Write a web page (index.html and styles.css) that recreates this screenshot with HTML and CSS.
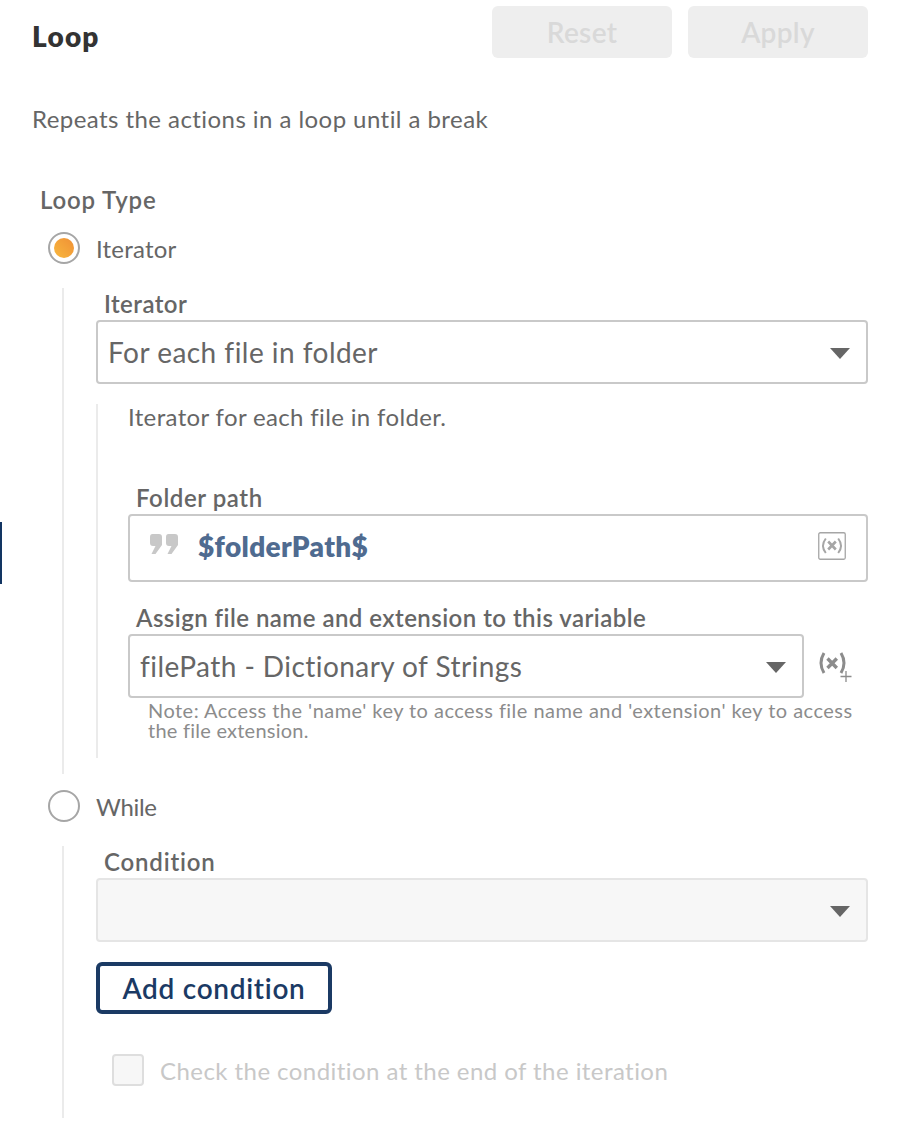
FILE: index.html
```html
<!DOCTYPE html>
<html lang="en">
<head>
<meta charset="utf-8">
<title>Loop</title>
<link rel="stylesheet" href="styles.css">
</head>
<body>
<main class="panel">
  <div class="edge-marker"></div>
  <header class="header">
    <h1 class="title">Loop</h1>
    <div class="actions">
      <button class="action" disabled>Reset</button>
      <button class="action" disabled>Apply</button>
    </div>
  </header>
  <p class="description">Repeats the actions in a loop until a break</p>
  <h2 class="label group-label">Loop Type</h2>

  <div class="option">
    <span class="radio radio-on"></span>
    <span class="option-text">Iterator</span>
  </div>
  <section class="branch branch-iterator">
    <div class="label label-iterator">Iterator</div>
    <div class="select">
      <span class="value">For each file in folder</span>
      <svg class="caret" viewBox="0 0 20 11"><path d="M0 0H20L10 11Z"/></svg>
    </div>
    <div class="nested">
      <p class="hint">Iterator for each file in folder.</p>
      <div class="label label-folder">Folder path</div>
      <div class="input">
        <svg class="quotes" viewBox="0 0 30 22"><path d="M3.500 1H10Q13 1 13 4V12L6.500 21H2.500L6.500 13H4Q1 13 1 10V4Q1 1 3.500 1Z"/><path d="M19.500 1H26Q29 1 29 4V12L22.500 21H18.500L22.500 13H20Q17 13 17 10V4Q17 1 19.500 1Z"/></svg>
        <span class="variable">$folderPath$</span>
        <svg class="insert" viewBox="0 0 28 28"><rect x=".75" y=".75" width="26.500" height="26.500" rx="1.500"/><path class="paren" d="M7.800 6.500Q2.200 13.800 7.800 21M20.200 6.500Q25.800 13.800 20.200 21"/><path class="cross" d="M10.200 9.500L17.800 17.500M17.800 9.500L10.200 17.500"/></svg>
      </div>
      <div class="label label-assign">Assign file name and extension to this variable</div>
      <div class="row">
        <div class="select">
          <span class="value value-file">filePath - Dictionary of Strings</span>
          <svg class="caret" viewBox="0 0 20 11"><path d="M0 0H20L10 11Z"/></svg>
        </div>
        <svg class="create" viewBox="0 0 34 32"><path class="paren" d="M6 2Q0 12 6 22M23 2Q29 12 23 22"/><path class="cross" d="M9.500 7.500L18.800 17M18.800 7.500L9.500 17"/><path class="plus" d="M22.500 25.500H33.500M28 20V31"/></svg>
      </div>
      <p class="note">Note: Access the 'name' key to access file name and 'extension' key to access<br><span class="note-end">the file extension.</span></p>
    </div>
  </section>

  <div class="option">
    <span class="radio"></span>
    <span class="option-text while-text">While</span>
  </div>
  <section class="branch branch-while">
    <div class="label label-condition">Condition</div>
    <div class="select select-disabled">
      <svg class="caret" viewBox="0 0 20 11"><path d="M0 0H20L10 11Z"/></svg>
    </div>
    <button class="add">Add condition</button>
    <div class="check">
      <span class="checkbox"></span>
      <span class="check-text">Check the condition at the end of the iteration</span>
    </div>
  </section>
</main>
</body>
</html>
```
FILE: styles.css
```css
* { box-sizing: border-box; }
body {
  margin: 0;
  background: #fff;
  color: #666;
  font: 24px/32px Lato, "Open Sans", sans-serif;
}
h1, h2, p { margin: 0; font-weight: 400; }
svg { display: block; flex: none; }
button { font-family: inherit; padding: 0; }
.panel {
  position: relative;
  width: 898px;
  height: 1124px;
  padding: 6px 30px 0 32px;
  overflow: hidden;
}
.edge-marker {
  position: absolute;
  left: 0;
  top: 522px;
  width: 2px;
  height: 62px;
  background: #123562;
}
.header { display: flex; justify-content: space-between; height: 97px; }
.title { font-size: 28px; font-weight: 800; line-height: 60px; letter-spacing: 1.2px; color: #333; }
.actions { display: flex; gap: 16px; }
.action {
  width: 180px;
  height: 52px;
  border: 0;
  border-radius: 6px;
  background: #eee;
  color: #d9d9d9;
  font-size: 28px;
  font-weight: 600;
  letter-spacing: .3px;
}
.description { height: 81px; letter-spacing: .44px; }
.label { padding-left: 8px; font-weight: 600; letter-spacing: .46px; white-space: nowrap; }
.group-label { height: 48px; font-size: 24px; letter-spacing: .85px; }
.label-iterator { letter-spacing: .42px; }
.label-folder { letter-spacing: .58px; }
.label-condition { letter-spacing: .82px; }
.option { display: flex; align-items: center; gap: 16px; height: 32px; padding-left: 16px; }
.option-text { padding-top: 2px; letter-spacing: .2px; }
.while-text { letter-spacing: -.3px; }
.radio {
  width: 32px;
  height: 32px;
  padding: 4px;
  border: 2px solid #a6a6a6;
  border-radius: 50%;
}
.radio-on::after {
  content: "";
  display: block;
  width: 20px;
  height: 20px;
  border-radius: 50%;
  background: linear-gradient(45deg, #f8b83f, #f09035);
}
.branch { margin: 24px 0 16px 30px; padding-left: 32px; border-left: 2px solid #ebebeb; }
.branch-iterator { height: 486px; }
.branch-while { height: 272px; }
.select, .input {
  display: flex;
  align-items: center;
  justify-content: space-between;
  height: 64px;
  padding: 0 16px 0 10px;
  border: 2px solid #c9c9c9;
  border-radius: 4px;
  white-space: nowrap;
}
.select-disabled { justify-content: flex-end; border-color: #e5e5e5; background: #f7f7f7; }
.value { font-size: 28px; letter-spacing: .47px; }
.value-file { letter-spacing: .44px; }
.caret { width: 20px; height: 11px; margin-top: 3px; fill: #666; }
.nested { height: 354px; margin-top: 20px; padding-left: 30px; border-left: 2px solid #ebebeb; }
.hint { height: 78px; line-height: 26px; letter-spacing: .35px; }
.input { justify-content: flex-start; height: 68px; padding: 0 20px 0 19px; }
.quotes { width: 30px; height: 22px; margin-top: -8px; fill: #c8c8c8; }
.variable { margin: -4px 0 0 19px; font-size: 28px; font-weight: 800; letter-spacing: .35px; color: #4f6b90; }
.insert { width: 28px; height: 28px; margin: -4px 0 0 auto; fill: none; stroke: #a6a6a6; stroke-width: 1.3; }
.insert .paren { stroke-width: 2; }
.insert .cross { stroke-width: 2.6; }
.label-assign { margin-top: 20px; }
.row { display: flex; align-items: center; gap: 14px; }
.row .select { width: 676px; }
.create { width: 34px; height: 32px; margin-top: 2px; fill: none; stroke: #8c8c8c; stroke-width: 3; }
.create .cross { stroke-width: 3.4; }
.create .plus { stroke-width: 1.3; }
.note { margin: 2px 0 0 20px; font-size: 20px; line-height: 20px; letter-spacing: .46px; color: #8c8c8c; white-space: nowrap; }
.note-end { letter-spacing: .24px; }
.add {
  display: block;
  width: 236px;
  height: 52px;
  margin-top: 20px;
  border: 4px solid #1b3a64;
  border-radius: 6px;
  background: #fff;
  color: #1b3a64;
  font-size: 28px;
  font-weight: 600;
  letter-spacing: .7px;
}
.check { display: flex; align-items: center; gap: 16px; height: 32px; margin: 40px 0 0 16px; color: #c8c8c8; }
.checkbox { width: 32px; height: 32px; border: 2px solid #dedede; border-radius: 4px; background: #f7f7f7; }
.check-text { padding-top: 2px; letter-spacing: .44px; }
```
